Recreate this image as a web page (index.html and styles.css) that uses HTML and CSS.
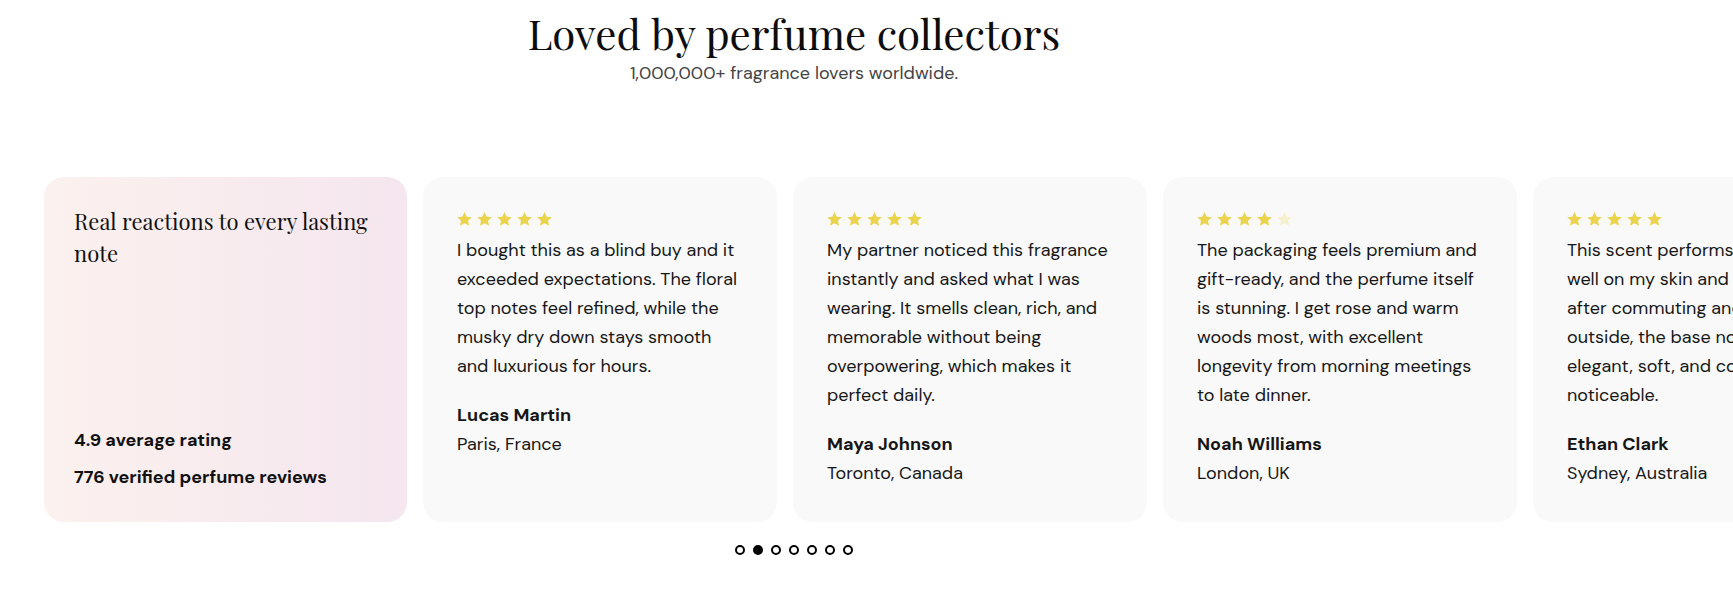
FILE: index.html
```html
<!DOCTYPE html>
<html lang="en">
<head>
<meta charset="utf-8">
<title>Loved by perfume collectors</title>
<link rel="stylesheet" href="styles.css">
</head>
<body>
<section class="reviews">
  <header class="intro">
    <h2 class="intro-title">Loved by perfume collectors</h2>
    <p class="intro-sub">1,000,000+ fragrance lovers worldwide.</p>
  </header>

  <aside class="summary">
    <h3 class="summary-title">Real reactions to every lasting note</h3>
    <div class="summary-stats">
      <p class="stat">4.9 average rating</p>
      <p class="stat">776 verified perfume reviews</p>
    </div>
  </aside>

  <div class="track">
    <article class="card">
      <div class="stars">
        <svg class="star" viewBox="0 0 24 24"><path d="M12 1.5l3.1 6.6 7.2.8-5.4 4.9 1.5 7.1L12 17.3l-6.4 3.6 1.5-7.1-5.4-4.9 7.2-.8z"/></svg>
        <svg class="star" viewBox="0 0 24 24"><path d="M12 1.5l3.1 6.6 7.2.8-5.4 4.9 1.5 7.1L12 17.3l-6.4 3.6 1.5-7.1-5.4-4.9 7.2-.8z"/></svg>
        <svg class="star" viewBox="0 0 24 24"><path d="M12 1.5l3.1 6.6 7.2.8-5.4 4.9 1.5 7.1L12 17.3l-6.4 3.6 1.5-7.1-5.4-4.9 7.2-.8z"/></svg>
        <svg class="star" viewBox="0 0 24 24"><path d="M12 1.5l3.1 6.6 7.2.8-5.4 4.9 1.5 7.1L12 17.3l-6.4 3.6 1.5-7.1-5.4-4.9 7.2-.8z"/></svg>
        <svg class="star" viewBox="0 0 24 24"><path d="M12 1.5l3.1 6.6 7.2.8-5.4 4.9 1.5 7.1L12 17.3l-6.4 3.6 1.5-7.1-5.4-4.9 7.2-.8z"/></svg>
      </div>
      <p class="quote">I bought this as a blind buy and it exceeded expectations. The floral top notes feel refined, while the musky dry down stays smooth and luxurious for hours.</p>
      <p class="name">Lucas Martin</p>
      <p class="place">Paris, France</p>
    </article>

    <article class="card">
      <div class="stars">
        <svg class="star" viewBox="0 0 24 24"><path d="M12 1.5l3.1 6.6 7.2.8-5.4 4.9 1.5 7.1L12 17.3l-6.4 3.6 1.5-7.1-5.4-4.9 7.2-.8z"/></svg>
        <svg class="star" viewBox="0 0 24 24"><path d="M12 1.5l3.1 6.6 7.2.8-5.4 4.9 1.5 7.1L12 17.3l-6.4 3.6 1.5-7.1-5.4-4.9 7.2-.8z"/></svg>
        <svg class="star" viewBox="0 0 24 24"><path d="M12 1.5l3.1 6.6 7.2.8-5.4 4.9 1.5 7.1L12 17.3l-6.4 3.6 1.5-7.1-5.4-4.9 7.2-.8z"/></svg>
        <svg class="star" viewBox="0 0 24 24"><path d="M12 1.5l3.1 6.6 7.2.8-5.4 4.9 1.5 7.1L12 17.3l-6.4 3.6 1.5-7.1-5.4-4.9 7.2-.8z"/></svg>
        <svg class="star" viewBox="0 0 24 24"><path d="M12 1.5l3.1 6.6 7.2.8-5.4 4.9 1.5 7.1L12 17.3l-6.4 3.6 1.5-7.1-5.4-4.9 7.2-.8z"/></svg>
      </div>
      <p class="quote">My partner noticed this fragrance instantly and asked what I was wearing. It smells clean, rich, and memorable without being overpowering, which makes it perfect daily.</p>
      <p class="name">Maya Johnson</p>
      <p class="place">Toronto, Canada</p>
    </article>

    <article class="card">
      <div class="stars">
        <svg class="star" viewBox="0 0 24 24"><path d="M12 1.5l3.1 6.6 7.2.8-5.4 4.9 1.5 7.1L12 17.3l-6.4 3.6 1.5-7.1-5.4-4.9 7.2-.8z"/></svg>
        <svg class="star" viewBox="0 0 24 24"><path d="M12 1.5l3.1 6.6 7.2.8-5.4 4.9 1.5 7.1L12 17.3l-6.4 3.6 1.5-7.1-5.4-4.9 7.2-.8z"/></svg>
        <svg class="star" viewBox="0 0 24 24"><path d="M12 1.5l3.1 6.6 7.2.8-5.4 4.9 1.5 7.1L12 17.3l-6.4 3.6 1.5-7.1-5.4-4.9 7.2-.8z"/></svg>
        <svg class="star" viewBox="0 0 24 24"><path d="M12 1.5l3.1 6.6 7.2.8-5.4 4.9 1.5 7.1L12 17.3l-6.4 3.6 1.5-7.1-5.4-4.9 7.2-.8z"/></svg>
        <svg class="star star-off" viewBox="0 0 24 24"><path d="M12 1.5l3.1 6.6 7.2.8-5.4 4.9 1.5 7.1L12 17.3l-6.4 3.6 1.5-7.1-5.4-4.9 7.2-.8z"/></svg>
      </div>
      <p class="quote">The packaging feels premium and gift-ready, and the perfume itself is stunning. I get rose and warm woods most, with excellent longevity from morning meetings to late dinner.</p>
      <p class="name">Noah Williams</p>
      <p class="place">London, UK</p>
    </article>

    <article class="card">
      <div class="stars">
        <svg class="star" viewBox="0 0 24 24"><path d="M12 1.5l3.1 6.6 7.2.8-5.4 4.9 1.5 7.1L12 17.3l-6.4 3.6 1.5-7.1-5.4-4.9 7.2-.8z"/></svg>
        <svg class="star" viewBox="0 0 24 24"><path d="M12 1.5l3.1 6.6 7.2.8-5.4 4.9 1.5 7.1L12 17.3l-6.4 3.6 1.5-7.1-5.4-4.9 7.2-.8z"/></svg>
        <svg class="star" viewBox="0 0 24 24"><path d="M12 1.5l3.1 6.6 7.2.8-5.4 4.9 1.5 7.1L12 17.3l-6.4 3.6 1.5-7.1-5.4-4.9 7.2-.8z"/></svg>
        <svg class="star" viewBox="0 0 24 24"><path d="M12 1.5l3.1 6.6 7.2.8-5.4 4.9 1.5 7.1L12 17.3l-6.4 3.6 1.5-7.1-5.4-4.9 7.2-.8z"/></svg>
        <svg class="star" viewBox="0 0 24 24"><path d="M12 1.5l3.1 6.6 7.2.8-5.4 4.9 1.5 7.1L12 17.3l-6.4 3.6 1.5-7.1-5.4-4.9 7.2-.8z"/></svg>
      </div>
      <p class="quote">This scent performs exceptionally well on my skin and lasts all day after commuting and long days outside, the base notes remain elegant, soft, and consistently noticeable.</p>
      <p class="name">Ethan Clark</p>
      <p class="place">Sydney, Australia</p>
    </article>
  </div>

  <nav class="dots" aria-label="Slides">
    <span class="dot"></span>
    <span class="dot dot-active"></span>
    <span class="dot"></span>
    <span class="dot"></span>
    <span class="dot"></span>
    <span class="dot"></span>
    <span class="dot"></span>
  </nav>
</section>
</body>
</html>
```

FILE: styles.css
```css
html, body {
  margin: 0;
  padding: 0;
  background: #ffffff;
  overflow: hidden;
}

body {
  font-family: "DM Sans", Lato, "Liberation Sans", sans-serif;
  color: #161616;
  width: 1733px;
  height: 589px;
}

.reviews {
  display: grid;
  grid-template-columns: 363px 742px;
  column-gap: 16px;
  padding: 9px 0 0 44px;
}

.intro {
  grid-column: 2;
  grid-row: 1;
  text-align: center;
  margin-bottom: 92px;
}

.intro-title {
  margin: 0;
  font-family: "Playfair Display", "Liberation Serif", serif;
  font-weight: 400;
  font-size: 42px;
  line-height: 49px;
  color: #0d0d0d;
  white-space: nowrap;
}

.intro-sub {
  margin: 3px 0 0;
  font-size: 18px;
  line-height: 24px;
  color: #444444;
}

.summary {
  grid-column: 1;
  grid-row: 2;
  border-radius: 20px;
  background: linear-gradient(90deg, #fbf1ee 0%, #f5e6ef 100%);
  padding: 28px 30px 32px;
  display: flex;
  flex-direction: column;
  justify-content: space-between;
}

.summary-title {
  margin: 0;
  font-family: "Playfair Display", "Liberation Serif", serif;
  font-weight: 400;
  font-size: 22px;
  line-height: 32px;
  color: #111111;
}

.summary-stats {
  display: flex;
  flex-direction: column;
  gap: 11px;
}

.stat {
  margin: 0;
  font-weight: 700;
  font-size: 18px;
  line-height: 26px;
  color: #111111;
}

.track {
  grid-column: 2;
  grid-row: 2;
  display: flex;
  gap: 16px;
}

.card {
  flex: 0 0 354px;
  box-sizing: border-box;
  border-radius: 20px;
  background: #f9f9f9;
  padding: 34px 34px 34px;
}

.stars {
  display: flex;
  gap: 3px;
  height: 17px;
  margin: 0 0 8px -1px;
}

.star {
  width: 17px;
  height: 17px;
  fill: #ebd44c;
}

.star-off {
  fill: #f6f0cf;
}

.quote {
  margin: 0;
  font-size: 18px;
  line-height: 29px;
}

.name {
  margin: 20px 0 0;
  font-weight: 700;
  font-size: 18px;
  line-height: 29px;
}

.place {
  margin: 0;
  font-size: 18px;
  line-height: 29px;
}

.dots {
  grid-column: 2;
  grid-row: 3;
  margin-top: 23px;
  display: flex;
  justify-content: center;
  gap: 8px;
}

.dot {
  width: 10px;
  height: 10px;
  box-sizing: border-box;
  border: 2px solid #000000;
  border-radius: 50%;
}

.dot-active {
  background: #000000;
}
```
